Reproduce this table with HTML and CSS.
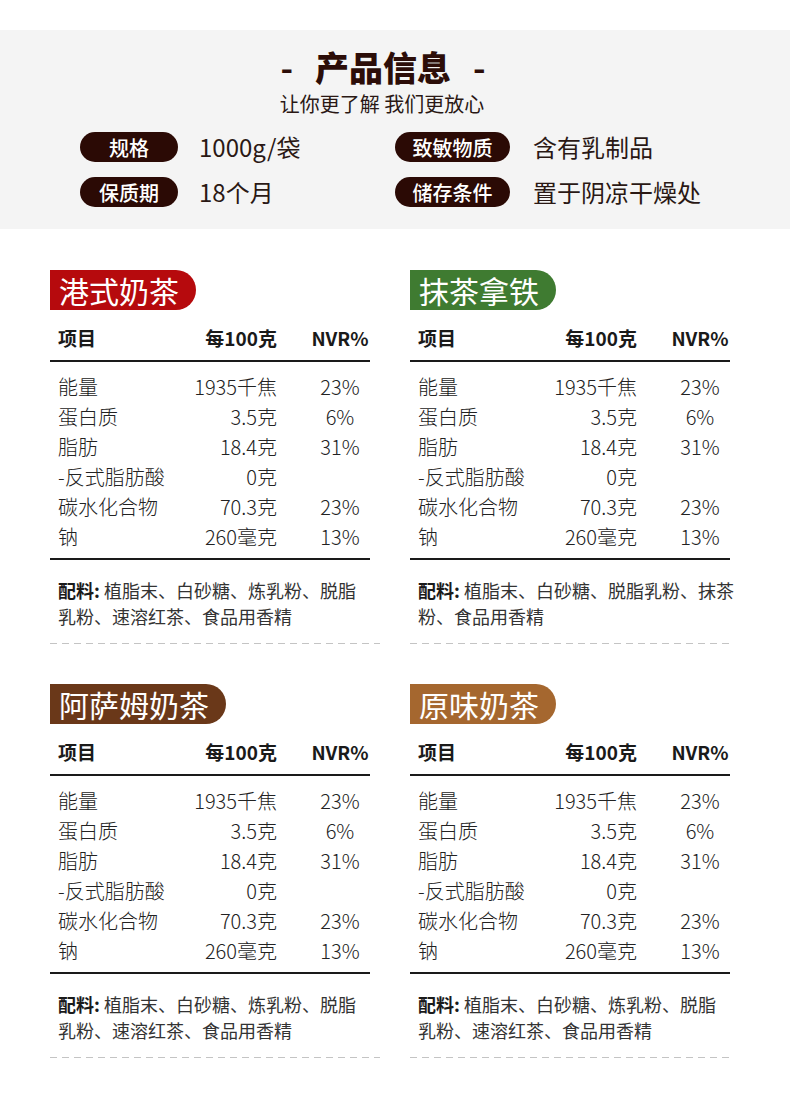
FILE: index.html
```html
<!DOCTYPE html>
<html lang="zh-CN">
<head>
<meta charset="utf-8">
<title>产品信息</title>
<link rel="stylesheet" href="styles.css">
</head>
<body>
<header class="info">
  <h1 class="info-title"><span class="dash">-</span>产品信息<span class="dash">-</span></h1>
  <p class="info-sub">让你更了解 我们更放心</p>
  <div class="info-grid">
    <div class="info-item"><span class="pill pill-s">规格</span><span class="info-val">1000g/袋</span></div>
    <div class="info-item"><span class="pill pill-l">致敏物质</span><span class="info-val">含有乳制品</span></div>
    <div class="info-item"><span class="pill pill-s">保质期</span><span class="info-val">18个月</span></div>
    <div class="info-item"><span class="pill pill-l">储存条件</span><span class="info-val">置于阴凉干燥处</span></div>
  </div>
</header>

<main class="products">
  <section class="product">
    <h2 class="tag tag-red">港式奶茶</h2>
    <div class="nt-head"><span>项目</span><span class="c2">每100克</span><span class="c3">NVR%</span></div>
    <div class="nt-body">
      <div class="nt-row"><span>能量</span><span class="c2">1935千焦</span><span class="c3">23%</span></div>
      <div class="nt-row"><span>蛋白质</span><span class="c2">3.5克</span><span class="c3">6%</span></div>
      <div class="nt-row"><span>脂肪</span><span class="c2">18.4克</span><span class="c3">31%</span></div>
      <div class="nt-row"><span>-反式脂肪酸</span><span class="c2">0克</span><span class="c3"></span></div>
      <div class="nt-row"><span>碳水化合物</span><span class="c2">70.3克</span><span class="c3">23%</span></div>
      <div class="nt-row"><span>钠</span><span class="c2">260毫克</span><span class="c3">13%</span></div>
    </div>
    <p class="ingr"><b>配料:</b> 植脂末、白砂糖、炼乳粉、脱脂<br>乳粉、速溶红茶、食品用香精</p>
    <div class="dashed"></div>
  </section>

  <section class="product">
    <h2 class="tag tag-green">抹茶拿铁</h2>
    <div class="nt-head"><span>项目</span><span class="c2">每100克</span><span class="c3">NVR%</span></div>
    <div class="nt-body">
      <div class="nt-row"><span>能量</span><span class="c2">1935千焦</span><span class="c3">23%</span></div>
      <div class="nt-row"><span>蛋白质</span><span class="c2">3.5克</span><span class="c3">6%</span></div>
      <div class="nt-row"><span>脂肪</span><span class="c2">18.4克</span><span class="c3">31%</span></div>
      <div class="nt-row"><span>-反式脂肪酸</span><span class="c2">0克</span><span class="c3"></span></div>
      <div class="nt-row"><span>碳水化合物</span><span class="c2">70.3克</span><span class="c3">23%</span></div>
      <div class="nt-row"><span>钠</span><span class="c2">260毫克</span><span class="c3">13%</span></div>
    </div>
    <p class="ingr"><b>配料:</b> 植脂末、白砂糖、脱脂乳粉、抹茶<br>粉、食品用香精</p>
    <div class="dashed dashed-narrow"></div>
  </section>

  <section class="product">
    <h2 class="tag tag-brown">阿萨姆奶茶</h2>
    <div class="nt-head"><span>项目</span><span class="c2">每100克</span><span class="c3">NVR%</span></div>
    <div class="nt-body">
      <div class="nt-row"><span>能量</span><span class="c2">1935千焦</span><span class="c3">23%</span></div>
      <div class="nt-row"><span>蛋白质</span><span class="c2">3.5克</span><span class="c3">6%</span></div>
      <div class="nt-row"><span>脂肪</span><span class="c2">18.4克</span><span class="c3">31%</span></div>
      <div class="nt-row"><span>-反式脂肪酸</span><span class="c2">0克</span><span class="c3"></span></div>
      <div class="nt-row"><span>碳水化合物</span><span class="c2">70.3克</span><span class="c3">23%</span></div>
      <div class="nt-row"><span>钠</span><span class="c2">260毫克</span><span class="c3">13%</span></div>
    </div>
    <p class="ingr"><b>配料:</b> 植脂末、白砂糖、炼乳粉、脱脂<br>乳粉、速溶红茶、食品用香精</p>
    <div class="dashed"></div>
  </section>

  <section class="product">
    <h2 class="tag tag-tan">原味奶茶</h2>
    <div class="nt-head"><span>项目</span><span class="c2">每100克</span><span class="c3">NVR%</span></div>
    <div class="nt-body">
      <div class="nt-row"><span>能量</span><span class="c2">1935千焦</span><span class="c3">23%</span></div>
      <div class="nt-row"><span>蛋白质</span><span class="c2">3.5克</span><span class="c3">6%</span></div>
      <div class="nt-row"><span>脂肪</span><span class="c2">18.4克</span><span class="c3">31%</span></div>
      <div class="nt-row"><span>-反式脂肪酸</span><span class="c2">0克</span><span class="c3"></span></div>
      <div class="nt-row"><span>碳水化合物</span><span class="c2">70.3克</span><span class="c3">23%</span></div>
      <div class="nt-row"><span>钠</span><span class="c2">260毫克</span><span class="c3">13%</span></div>
    </div>
    <p class="ingr"><b>配料:</b> 植脂末、白砂糖、炼乳粉、脱脂<br>乳粉、速溶红茶、食品用香精</p>
    <div class="dashed dashed-narrow"></div>
  </section>
</main>
</body>
</html>
```

FILE: styles.css
```css
* { box-sizing: border-box; }

body {
  margin: 0;
  background: #ffffff;
  font-family: "Noto Sans CJK SC", "Noto Sans", sans-serif;
  color: #222;
}

/* ---------- top info band ---------- */
.info {
  margin-top: 30px;
  height: 199px;
  background: #f4f4f4;
  padding-top: 17px;
}

.info-title {
  margin: 0;
  padding-right: 24px;
  height: 40px;
  line-height: 40px;
  text-align: center;
  font-size: 34px;
  font-weight: 900;
  color: #2c0d08;
}

.info-title .dash {
  display: inline-block;
  margin: 0 22px;
  font-weight: 700;
}

.info-sub {
  margin: 5px 0 0;
  padding-right: 26px;
  height: 24px;
  line-height: 24px;
  text-align: center;
  font-size: 20px;
  color: #2a1814;
}

.info-grid {
  margin-top: 16px;
  padding-left: 80px;
  display: grid;
  grid-template-columns: 315px auto;
  row-gap: 15px;
}

.info-item {
  display: flex;
  align-items: center;
  height: 30px;
}

.pill {
  display: inline-flex;
  align-items: center;
  justify-content: center;
  height: 30px;
  border-radius: 15px;
  background: #2b0a05;
  color: #fff;
  font-size: 20px;
  font-weight: 500;
}

.pill-s { width: 98px; margin-right: 21px; }
.pill-l { width: 115px; margin-right: 23px; }

.info-val {
  font-size: 24px;
  color: #2a1814;
  line-height: 30px;
}

/* ---------- products ---------- */
.products {
  margin-top: 41px;
  padding-left: 50px;
  display: grid;
  grid-template-columns: 330px 330px;
  column-gap: 30px;
  row-gap: 40px;
}

.product { width: 330px; }

.tag {
  margin: 0;
  display: inline-block;
  height: 40px;
  line-height: 40px;
  padding: 0 17px 0 9px;
  border-radius: 0 20px 20px 0;
  color: #fff;
  font-size: 30px;
  font-weight: 400;
}

.tag-red { background: #b60a0d; }
.tag-green { background: #3f7b31; }
.tag-brown { background: #6a3819; }
.tag-tan { background: #a5672f; }

.nt-head,
.nt-row {
  width: 320px;
  display: grid;
  grid-template-columns: 1fr 100px 93px;
  padding-left: 8px;
  align-items: center;
  white-space: nowrap;
}

.c2 { text-align: right; }
.c3 { text-align: center; padding-left: 33px; }

.nt-head {
  margin-top: 13px;
  height: 39px;
  padding-bottom: 7px;
  border-bottom: 2px solid #1a1a1a;
  font-size: 19px;
  font-weight: 700;
  color: #1a1a1a;
  line-height: 30px;
}

.nt-body {
  width: 320px;
  padding: 10px 0 6px;
  border-bottom: 2px solid #1a1a1a;
}

.nt-row {
  height: 30px;
  line-height: 30px;
  font-size: 20px;
  font-weight: 300;
  color: #222;
}

.ingr {
  margin: 17px 0 0 8px;
  font-size: 18px;
  line-height: 26px;
  color: #333;
  white-space: nowrap;
}

.ingr b {
  font-weight: 700;
  color: #1a1a1a;
}

.dashed {
  margin-top: 14px;
  height: 1px;
  width: 330px;
  background: repeating-linear-gradient(90deg, #c4c4c4 0 7px, transparent 7px 12px);
}

.dashed-narrow { width: 320px; }
```
